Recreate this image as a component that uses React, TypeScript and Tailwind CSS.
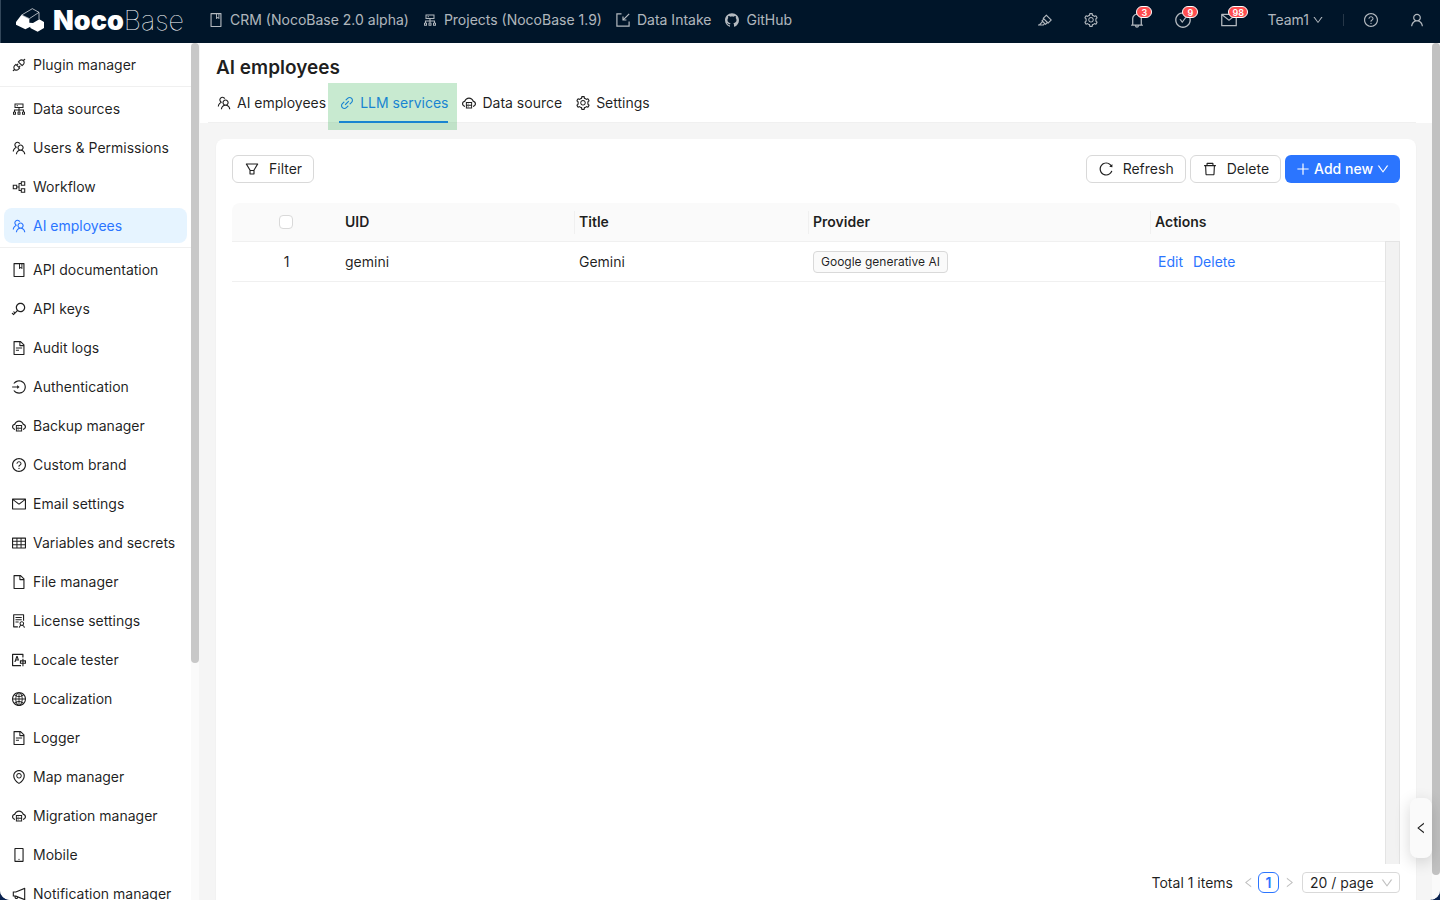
// src/pages/llm-services.tsx
import { useState } from "react";
import type { ComponentType } from "react";
import {
  AiOutlineApi,
  AiOutlineBell,
  AiOutlineBook,
  AiOutlineCheckCircle,
  AiOutlineCloudServer,
  AiOutlineCluster,
  AiOutlineDelete,
  AiOutlineDown,
  AiOutlineEnvironment,
  AiOutlineFile,
  AiOutlineFileText,
  AiOutlineFilter,
  AiOutlineGithub,
  AiOutlineGlobal,
  AiOutlineHighlight,
  AiOutlineKey,
  AiOutlineLeft,
  AiOutlineLink,
  AiOutlineLogin,
  AiOutlineMail,
  AiOutlineMobile,
  AiOutlineNotification,
  AiOutlinePartition,
  AiOutlinePlus,
  AiOutlineQuestionCircle,
  AiOutlineReload,
  AiOutlineRight,
  AiOutlineSetting,
  AiOutlineSolution,
  AiOutlineTable,
  AiOutlineTeam,
  AiOutlineTranslation,
  AiOutlineUser,
} from "react-icons/ai";

type Icon = ComponentType<{ size?: number; className?: string }>;
type Item = { label: string; icon: Icon; active?: boolean };
type Action = { label: string; icon: Icon; size: number; badge?: string };

// box with an arrow pointing into it
function IntakeIcon({ size = 16, className }: { size?: number; className?: string }) {
  return (
    <svg viewBox="0 0 16 16" width={size} height={size} className={className} fill="none" stroke="currentColor">
      <path d="M6.5 1.9H1.9V14.1H14.1V9.5" strokeWidth="1.2" />
      <path d="M14.2 1.8L8.4 7.6" strokeWidth="1.2" />
      <path d="M8 4.6V8H11.4" strokeWidth="1.2" />
    </svg>
  );
}

const NAV: Item[] = [
  { label: "CRM (NocoBase 2.0 alpha)", icon: AiOutlineBook },
  { label: "Projects (NocoBase 1.9)", icon: AiOutlineCluster },
  { label: "Data Intake", icon: IntakeIcon },
  { label: "GitHub", icon: AiOutlineGithub },
];

const ACTIONS: Action[] = [
  { label: "UI editor", icon: AiOutlineHighlight, size: 16 },
  { label: "Settings", icon: AiOutlineSetting, size: 16 },
  { label: "Notifications", icon: AiOutlineBell, size: 18, badge: "3" },
  { label: "Tasks", icon: AiOutlineCheckCircle, size: 18, badge: "9" },
  { label: "Mail", icon: AiOutlineMail, size: 18, badge: "98" },
];

// each group is separated by a divider
const MENU: Item[][] = [
  [{ label: "Plugin manager", icon: AiOutlineApi }],
  [
    { label: "Data sources", icon: AiOutlineCluster },
    { label: "Users & Permissions", icon: AiOutlineTeam },
    { label: "Workflow", icon: AiOutlinePartition },
    { label: "AI employees", icon: AiOutlineTeam, active: true },
  ],
  [
    { label: "API documentation", icon: AiOutlineBook },
    { label: "API keys", icon: AiOutlineKey },
    { label: "Audit logs", icon: AiOutlineFileText },
    { label: "Authentication", icon: AiOutlineLogin },
    { label: "Backup manager", icon: AiOutlineCloudServer },
    { label: "Custom brand", icon: AiOutlineQuestionCircle },
    { label: "Email settings", icon: AiOutlineMail },
    { label: "Variables and secrets", icon: AiOutlineTable },
    { label: "File manager", icon: AiOutlineFile },
    { label: "License settings", icon: AiOutlineSolution },
    { label: "Locale tester", icon: AiOutlineTranslation },
    { label: "Localization", icon: AiOutlineGlobal },
    { label: "Logger", icon: AiOutlineFileText },
    { label: "Map manager", icon: AiOutlineEnvironment },
    { label: "Migration manager", icon: AiOutlineCloudServer },
    { label: "Mobile", icon: AiOutlineMobile },
    { label: "Notification manager", icon: AiOutlineNotification },
  ],
];

const TABS: Item[] = [
  { label: "AI employees", icon: AiOutlineTeam },
  { label: "LLM services", icon: AiOutlineLink, active: true },
  { label: "Data source", icon: AiOutlineCloudServer },
  { label: "Settings", icon: AiOutlineSetting },
];

const ROWS = [{ uid: "gemini", title: "Gemini", provider: "Google generative AI" }];

function Logo() {
  return (
    <a href="#" className="flex items-center gap-[9px] text-white">
      <svg viewBox="48 24 84 72" className="h-6 w-7" fill="none">
        <path
          d="M48 66L64 45L88 57V68L99 69L118 58L132 66V84L113 95L91 84V80L76 88L48 74Z"
          fill="currentColor"
        />
        <path
          d="M65 45L97 26L117 37V58M65 45L88 56L117 37"
          stroke="currentColor"
          strokeWidth="2"
          strokeLinejoin="round"
        />
      </svg>
      <span className="text-[27px] leading-none">
        <span className="font-black">Noco</span>
        <span className="font-thin">Base</span>
      </span>
    </a>
  );
}

function TopBar() {
  return (
    <header className="flex h-[43px] shrink-0 items-center border-l border-[#33475a] bg-[#001529] pb-[3px] pl-[15px] text-white/70">
      <Logo />
      <nav className="ml-6 flex items-center gap-[13px] text-sm">
        {NAV.map(({ label, icon: Icon }) => (
          <a key={label} href="#" className="flex items-center gap-1.5 whitespace-nowrap">
            <Icon size={16} />
            {label}
          </a>
        ))}
      </nav>
      <div className="ml-auto flex items-center">
        {ACTIONS.map(({ label, icon: Icon, size, badge }) => (
          <button key={label} aria-label={label} className="flex w-[46px] justify-center">
            <span className="relative">
              <Icon size={size} />
              {badge && (
                <span className="absolute -top-[5px] left-2 flex h-3 min-w-4 items-center justify-center rounded-full border border-white bg-[#ff4d4f] px-[3px] text-[9px] font-semibold leading-none text-white">
                  {badge}
                </span>
              )}
            </span>
          </button>
        ))}
        <button className="flex items-center gap-[3px] px-[15px] text-sm">
          Team1
          <AiOutlineDown size={12} />
        </button>
        <span className="mx-1 h-3 w-px bg-white/15" />
        <button aria-label="Help" className="flex w-[46px] justify-center">
          <AiOutlineQuestionCircle size={16} />
        </button>
        <button aria-label="Account" className="flex w-[46px] justify-center">
          <AiOutlineUser size={16} />
        </button>
      </div>
    </header>
  );
}

function Sidebar() {
  return (
    <aside className="flex w-[199px] shrink-0 bg-white">
      <nav className="min-w-0 flex-1 overflow-hidden pt-0.5">
        {MENU.map((group, i) => (
          <div key={i}>
            {i > 0 && <div className="my-0.5 h-px bg-[#f0f0f0]" />}
            {group.map(({ label, icon: Icon, active }) => (
              <div key={label} className="px-1 py-0.5">
                <a
                  href="#"
                  className={
                    active
                      ? "flex h-[35px] items-center gap-1.5 whitespace-nowrap rounded-lg bg-[#e6f4ff] px-[7px] text-[#2b75ff]"
                      : "flex h-[35px] items-center gap-1.5 whitespace-nowrap rounded-lg px-[7px]"
                  }
                >
                  <Icon size={16} className="shrink-0" />
                  {label}
                </a>
              </div>
            ))}
          </div>
        ))}
      </nav>
      <div className="w-2 bg-[#fafafa]">
        <div className="h-[620px] rounded-full bg-[#c8c8c8]" />
      </div>
    </aside>
  );
}

function PageHeader() {
  return (
    <div className="bg-white pl-2 pr-4">
      <h1 className="px-2 pt-2.5 text-[19px] font-semibold leading-[30px]">AI employees</h1>
      <div role="tablist" className="flex gap-[13px] border-b border-[#f0f0f0] px-2">
        {TABS.map(({ label, icon: Icon, active }) => (
          <button
            key={label}
            role="tab"
            aria-selected={!!active}
            className={
              active
                ? "relative -mb-px flex h-10 items-center gap-[5px] border-b-2 border-[#1677ff] pt-0.5 text-[#1677ff]"
                : "relative -mb-px flex h-10 items-center gap-[5px] border-b-2 border-transparent pt-0.5"
            }
          >
            <Icon size={16} />
            {label}
            {active && (
              <span className="absolute -bottom-[9px] -left-[11px] -right-[9px] top-0 z-10 bg-[#22ab44]/25" />
            )}
          </button>
        ))}
      </div>
    </div>
  );
}

const BTN = "flex h-7 items-center gap-[9px] rounded-md border border-[#d9d9d9] bg-white px-[11px]";
const TH = "h-[38px] px-1 text-left font-semibold";
const SEP = "absolute -left-px top-2 h-[23px] w-px bg-[#f0f0f0]";

function Toolbar() {
  return (
    <div className="flex items-center gap-1">
      <button className={BTN}>
        <AiOutlineFilter size={16} />
        Filter
      </button>
      <button className={`${BTN} ml-auto`}>
        <AiOutlineReload size={16} />
        Refresh
      </button>
      <button className={BTN}>
        <AiOutlineDelete size={16} />
        Delete
      </button>
      <button className="flex h-7 items-center gap-[3px] rounded-md bg-[#2b75ff] px-2.5 font-medium text-white">
        <AiOutlinePlus size={16} />
        Add new
        <AiOutlineDown size={14} />
      </button>
    </div>
  );
}

function ServicesTable() {
  const [checked, setChecked] = useState(false);

  return (
    <div className="mt-5 flex min-h-0 flex-1">
      <div className="min-w-0 flex-1">
        <table className="w-full table-fixed border-collapse">
          <colgroup>
            <col className="w-[109px]" />
            <col className="w-[234px]" />
            <col className="w-[234px]" />
            <col className="w-[342px]" />
            <col />
          </colgroup>
          <thead>
            <tr className="border-b border-[#f0f0f0]">
              <th className="h-[38px] rounded-tl-lg bg-[#fafafa] pr-0.5">
                <input
                  type="checkbox"
                  aria-label="Select all"
                  checked={checked}
                  onChange={(e) => setChecked(e.target.checked)}
                  className="mx-auto block size-3.5 appearance-none rounded-sm border border-[#d9d9d9] bg-white checked:border-[#2b75ff] checked:bg-[#2b75ff]"
                />
              </th>
              <th className={`${TH} bg-[#fafafa]`}>UID</th>
              {["Title", "Provider", "Actions"].map((name) => (
                <th key={name} className={`${TH} relative bg-[#fafafa]`}>
                  <span className={SEP} />
                  {name}
                </th>
              ))}
            </tr>
          </thead>
          <tbody>
            {ROWS.map((row, i) => (
              <tr key={row.uid} className="h-10 border-b border-[#f0f0f0]">
                <td className="pt-px text-center">{i + 1}</td>
                <td className="px-1 pt-px">{row.uid}</td>
                <td className="px-1 pt-px">{row.title}</td>
                <td className="px-1 pt-px">
                  <span className="inline-block rounded border border-[#d9d9d9] bg-[#fafafa] px-[7px] align-middle text-xs leading-5">
                    {row.provider}
                  </span>
                </td>
                <td className="px-[7px] pt-px">
                  <div className="flex gap-2.5 text-[#2b75ff]">
                    <a href="#">Edit</a>
                    <a href="#">Delete</a>
                  </div>
                </td>
              </tr>
            ))}
          </tbody>
        </table>
      </div>
      {/* table scrollbar */}
      <div className="flex w-[15px] flex-col">
        <div className="h-[38px] rounded-tr-lg bg-[#fafafa]" />
        <div className="flex-1 border-x border-t border-[#e4e4e4] bg-[#f2f2f2]" />
      </div>
    </div>
  );
}

function Pagination() {
  return (
    <div className="flex items-center justify-end pb-[7px] pt-2">
      <span className="mr-2">Total 1 items</span>
      <button aria-label="Previous page" className="flex w-[14px] justify-center text-black/25">
        <AiOutlineLeft size={13} />
      </button>
      <button className="mx-[3px] h-[21px] w-[21px] rounded-md border border-[#2b75ff] font-semibold leading-[19px] text-[#2b75ff]">
        1
      </button>
      <button aria-label="Next page" className="flex w-[14px] justify-center text-black/25">
        <AiOutlineRight size={13} />
      </button>
      <div className="relative ml-1.5">
        <select
          aria-label="Page size"
          className="block h-[21px] w-[98px] appearance-none rounded border border-[#d9d9d9] bg-white pl-[7px] leading-[19px]"
        >
          <option>20 / page</option>
          <option>50 / page</option>
        </select>
        <AiOutlineDown size={14} className="pointer-events-none absolute right-1.5 top-1 text-black/25" />
      </div>
    </div>
  );
}

export default function App() {
  return (
    <div className="h-screen bg-[#0a2350]">
      <div className="relative flex h-full flex-col overflow-hidden rounded-b-[10px] bg-[#f5f5f5] font-['Inter','Liberation_Sans',sans-serif] text-sm text-black/88">
        <TopBar />
        <div className="flex min-h-0 flex-1">
          <Sidebar />
          <main className="ml-px flex min-w-0 flex-1 flex-col">
            <PageHeader />
            <section className="mx-4 mt-4 flex min-h-0 flex-1 flex-col rounded-t-lg bg-white px-4 pt-4 shadow-xs">
              <Toolbar />
              <ServicesTable />
              <Pagination />
            </section>
          </main>
          {/* page scrollbar */}
          <div className="w-2 bg-[#fafafa] pb-[25px]">
            <div className="h-full rounded-full bg-[#c1c1c1]" />
          </div>
        </div>
        <button
          aria-label="Open panel"
          className="absolute bottom-[42px] right-2 flex h-[60px] w-[22px] items-center justify-center rounded-lg bg-[#fafafa] shadow-[0_4px_16px_rgba(0,0,0,0.16)]"
        >
          <AiOutlineLeft size={14} />
        </button>
      </div>
    </div>
  );
}
